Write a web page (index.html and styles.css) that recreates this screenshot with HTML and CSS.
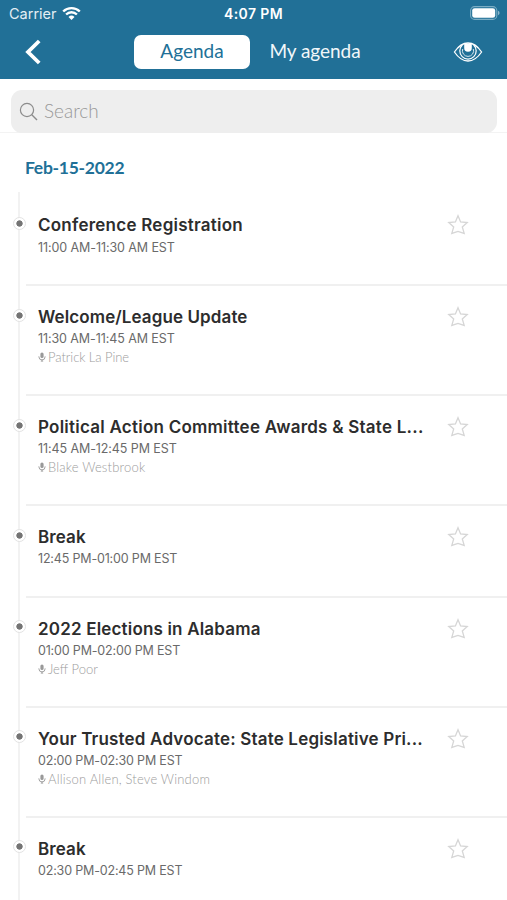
FILE: index.html
```html
<!DOCTYPE html>
<html lang="en">
<head>
<meta charset="utf-8">
<meta name="viewport" content="width=device-width, initial-scale=1">
<title>Agenda</title>
<link rel="stylesheet" href="styles.css">
</head>
<body>
<svg class="defs" width="0" height="0" aria-hidden="true">
  <symbol id="star" viewBox="0 0 22 22"><path d="M11 1.8 L13.6 8 L20.2 8.6 L15.3 12.9 L17.2 19.4 L11 17.4 L4.8 19.4 L6.7 12.9 L1.8 8.6 L8.4 8 Z" fill="none" stroke="#d6d6d6" stroke-width="1.3"/></symbol>
  <symbol id="mic" viewBox="0 0 8 10"><rect x="2.4" y="0.5" width="3.2" height="5.5" rx="1.6" fill="#999"/><path d="M0.9 4.3 V4.8 A3.1 3.1 0 0 0 7.1 4.8 V4.3 M4 7.8 V9 M2.8 9.1 H5.2" fill="none" stroke="#a2a2a2" stroke-width="1"/></symbol>
</svg>
<header class="top">
  <div class="status">
    <span class="carrier">Carrier</span>
    <svg class="wifi" width="19" height="15" viewBox="0 0 19 15"><path d="M1.2 5.5 A11.8 11.8 0 0 1 17.8 5.5 M4.1 8.5 A7.7 7.7 0 0 1 14.9 8.5" fill="none" stroke="#fff" stroke-width="2.4"/><path d="M9.5 14 L6.5 11 A4.3 4.3 0 0 1 12.5 11 Z" fill="#fff"/></svg>
    <span class="clock">4:07 PM</span>
    <svg class="battery" width="30" height="14" viewBox="0 0 30 14"><rect x="0.6" y="0.6" width="26.2" height="12.8" rx="4" fill="none" stroke="#7badc4" stroke-width="1.1"/><rect x="2.2" y="2.2" width="23" height="9.6" rx="2.4" fill="#fff"/><path d="M28 4.8 Q29.6 5.4 29.6 7 T28 9.2 Z" fill="#8db6cb"/></svg>
  </div>
  <nav class="nav">
    <svg class="back" width="20" height="26" viewBox="0 0 20 26"><path d="M16.2 2 L5 13 L16.2 24" fill="none" stroke="#fff" stroke-width="3.8"/></svg>
    <div class="tab active"><span>Agenda</span></div>
    <div class="tab other"><span>My agenda</span></div>
    <svg class="eye" width="30" height="22" viewBox="0 0 30 22"><path d="M1.4 11 Q7.5 2 15 2 T28.6 11 Q22.5 20 15 20 T1.4 11 Z" fill="none" stroke="#fff" stroke-width="1.3"/><path d="M9.3 4 A8.2 8.2 0 1 0 20.7 4" fill="none" stroke="#fff" stroke-width="1.2"/><path d="M9.7 8 A5.6 5.6 0 1 0 20.3 8" fill="none" stroke="#d5e6ee" stroke-width="1"/><path d="M11.2 2.4 H18.8 V7 A3.8 3.8 0 0 1 11.2 7 Z" fill="#fff"/></svg>
  </nav>
</header>
<div class="search-bar">
  <div class="search">
    <svg width="20" height="20" viewBox="0 0 20 20"><circle cx="8" cy="8" r="6.6" fill="none" stroke="#8c8c8c" stroke-width="1.2"/><path d="M12.8 12.8 L18 18" stroke="#8c8c8c" stroke-width="1.4"/></svg>
    <span class="placeholder">Search</span>
  </div>
</div>
<h2 class="date"><span>Feb-15-2022</span></h2>
<main class="list">
  <section class="row"><i class="dot"></i><div class="body"><div class="info"><b class="title">Conference Registration</b><span class="time">11:00 AM-11:30 AM EST</span></div><svg class="star"><use href="#star"/></svg></div></section>
  <section class="row tall"><i class="dot"></i><div class="body"><div class="info"><b class="title snug">Welcome/League Update</b><span class="time">11:30 AM-11:45 AM EST</span><span class="who tight"><svg class="mic"><use href="#mic"/></svg><span>Patrick La Pine</span></span></div><svg class="star"><use href="#star"/></svg></div></section>
  <section class="row tall"><i class="dot"></i><div class="body"><div class="info"><b class="title">Political Action Committee Awards &amp; State L...</b><span class="time">11:45 AM-12:45 PM EST</span><span class="who wide"><svg class="mic"><use href="#mic"/></svg><span>Blake Westbrook</span></span></div><svg class="star"><use href="#star"/></svg></div></section>
  <section class="row"><i class="dot"></i><div class="body"><div class="info"><b class="title snug">Break</b><span class="time pm">12:45 PM-01:00 PM EST</span></div><svg class="star"><use href="#star"/></svg></div></section>
  <section class="row tall"><i class="dot"></i><div class="body"><div class="info"><b class="title mid">2022 Elections in Alabama</b><span class="time pm">01:00 PM-02:00 PM EST</span><span class="who"><svg class="mic"><use href="#mic"/></svg><span>Jeff Poor</span></span></div><svg class="star"><use href="#star"/></svg></div></section>
  <section class="row tall"><i class="dot"></i><div class="body"><div class="info"><b class="title mid">Your Trusted Advocate: State Legislative Pri...</b><span class="time pm">02:00 PM-02:30 PM EST</span><span class="who wide"><svg class="mic"><use href="#mic"/></svg><span>Allison Allen, Steve Windom</span></span></div><svg class="star"><use href="#star"/></svg></div></section>
  <section class="row"><i class="dot"></i><div class="body"><div class="info"><b class="title snug">Break</b><span class="time pm">02:30 PM-02:45 PM EST</span></div><svg class="star"><use href="#star"/></svg></div></section>
</main>
</body>
</html>
```
FILE: styles.css
```css
* { box-sizing: border-box; }
html, body { margin: 0; height: 900px; overflow: hidden; }
body { background: #fff; font-family: Inter, "Liberation Sans", sans-serif; color: #2d2d2d; }
svg { display: block; flex: none; }
.defs { position: absolute; }
.top { height: 79px; background: #217097; color: #fff; }
.status { height: 28px; display: grid; grid-template-columns: 53px 162px auto 1fr auto; align-items: center; padding: 0 7px 0 9px; }
.carrier { font-size: 14.5px; color: #e3eef4; margin-top: -2px; }
.wifi { margin-top: -2px; }
.clock { font-size: 14px; font-weight: 600; letter-spacing: 0.4px; margin-top: -1px; }
.battery { grid-column: 5; margin-top: -2px; }
.nav { height: 51px; display: flex; align-items: flex-start; padding: 0 24px 0 23px; }
.back { margin-top: 11px; }
.tab { height: 34px; margin-top: 7px; display: flex; align-items: center; justify-content: center; font-family: Lato, sans-serif; font-size: 19px; line-height: 30px; padding-bottom: 2px; white-space: nowrap; }
.active { margin-left: 91px; width: 116px; background: #fff; color: #217097; border-radius: 7px; }
.other { width: 130px; color: #f1f7fa; letter-spacing: -0.05px; }
.eye { margin: 13px 0 0 auto; }
.search-bar { height: 54px; padding: 11px 10px 0 11px; border-bottom: 1px solid #f3f3f3; }
.search { height: 43px; background: #eee; border-radius: 11px; display: flex; align-items: center; padding-left: 8px; gap: 5px; position: relative; }
.placeholder { font-family: Lato, sans-serif; font-size: 19px; color: #999; line-height: 40px; margin-top: -2px; font-weight: 300; }
.date { margin: 0; height: 59px; padding: 22px 0 0 25px; font: 700 17.5px/26px Lato, sans-serif; letter-spacing: -0.28px; color: #217097; }
.list { height: 708px; padding-top: 2.4px; overflow: hidden; background: linear-gradient(#f2f2f2, #f2f2f2) 18px 0 / 2px 100% no-repeat; }
.row { height: 91.7px; display: flex; }
.row.tall { height: 110px; }
.dot { flex: none; width: 13px; height: 13px; margin: 22.6px 0 0 12.6px; border: 1px solid #e3e3e3; border-radius: 50%; background: radial-gradient(circle, #747474 0 2.8px, #fff 3.5px); }
.body { flex: 1; display: flex; border-bottom: 2px solid #f0f0f0; padding: 20px 38px 0 12.4px; justify-content: space-between; }
.row:last-child .body { border: 0; }
.info { display: flex; flex-direction: column; }
.title { width: max-content; font-size: 17px; font-weight: 600; line-height: 22px; white-space: nowrap; letter-spacing: 0.24px; }
.title.mid { letter-spacing: 0.18px; }
.title.snug { letter-spacing: 0.1px; }
.time { width: max-content; font-size: 12.5px; line-height: 18px; margin-top: 2.4px; color: #6a6a6a; white-space: nowrap; letter-spacing: -0.09px; }
.time.pm { letter-spacing: -0.17px; }
.who { width: max-content; display: flex; align-items: center; gap: 2px; margin-top: -0.5px; font: 300 13px/18px Lato, sans-serif; color: #9c9c9c; }
.who.tight { letter-spacing: -0.06px; }
.who.wide { letter-spacing: 0.19px; }
.mic { width: 8px; height: 10px; }
.star { width: 22px; height: 22px; }
```
